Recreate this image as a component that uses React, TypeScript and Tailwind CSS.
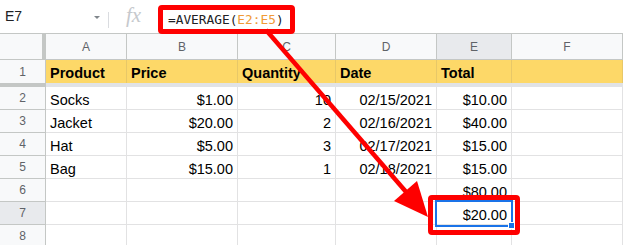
import React from "react";

const cols = "grid grid-cols-[46px_81px_111px_98px_101px_75px_111px]";

const rows: { n: number; cells: string[] }[] = [
  { n: 2, cells: ["Socks", "$1.00", "10", "02/15/2021", "$10.00", ""] },
  { n: 3, cells: ["Jacket", "$20.00", "2", "02/16/2021", "$40.00", ""] },
  { n: 4, cells: ["Hat", "$5.00", "3", "02/17/2021", "$15.00", ""] },
  { n: 5, cells: ["Bag", "$15.00", "1", "02/18/2021", "$15.00", ""] },
  { n: 6, cells: ["", "", "", "", "$80.00", ""] },
  { n: 7, cells: ["", "", "", "", "$20.00", ""] },
  { n: 8, cells: ["", "", "", "", "", ""] },
];

export default function App() {
  return (
    <div className="relative w-[623px] h-[245px] overflow-hidden bg-white font-['Liberation_Sans',Arial,sans-serif] text-black">
      {/* formula bar */}
      <div className="flex h-[34px] border-b border-[#c4c7c5]">
        <div className="flex w-[108px] items-center justify-between pl-[5px] pr-[8px] text-[14px] text-[#202124]">
          <span>E7</span>
          <span className="mt-[2px] h-0 w-0 border-x-[3px] border-t-[3px] border-x-transparent border-t-[#80868b]" />
        </div>
        <div className="mt-[12px] h-[16px] w-px bg-[#dadce0]" />
        <div className="flex w-[49px] items-center justify-center pb-[2px] font-['Liberation_Serif',serif] text-[21px] italic text-[#c6c9cd]">
          fx
        </div>
        <div className="mt-[5px] flex h-[29px] w-[137px] items-center rounded-[4px] border-[5px] border-[#fe0000] bg-white pl-[5px] font-['DejaVu_Sans_Mono',monospace] text-[12.8px] text-[#202124]">
          =AVERAGE(<span className="text-[#f09a37]">E2:E5</span>)
        </div>
      </div>

      {/* column headers */}
      <div className={`${cols} h-[26px] border-b border-[#c4c7c5] bg-[#f8f9fa] text-[12px] text-[#5f6368]`}>
        <div className="border-r-[4px] border-[#c4c7c5]" />
        {["A", "B", "C", "D", "E", "F"].map((c) => (
          <div
            key={c}
            className={`flex items-center justify-center border-r border-[#c4c7c5] ${c === "E" ? "bg-[#e8eaed]" : ""}`}
          >
            {c}
          </div>
        ))}
      </div>

      {/* header row 1 */}
      <div className={`${cols} h-[23px] text-[14.5px] font-bold`}>
        <div className="flex items-center justify-center border-r border-[#c4c7c5] bg-[#f8f9fa] text-[12px] font-normal text-[#5f6368]">
          1
        </div>
        {["Product", "Price", "Quantity", "Date", "Total", ""].map((h, i) => (
          <div key={i} className="flex items-end border-r border-[#e8c868] bg-[#fdd868] px-[4px] pb-[2px] leading-[16px]">
            {h}
          </div>
        ))}
      </div>
      <div className="flex h-[4px]">
        <div className="w-[46px] bg-[#c4c7c5]" />
        <div className="flex-1 bg-[#e1e3e6]" />
      </div>

      {rows.map((r) => (
        <div key={r.n} className={`${cols} h-[23px] text-[14.5px]`}>
          <div
            className={`flex items-center justify-center border-r border-b border-[#c4c7c5] text-[12px] text-[#5f6368] ${r.n === 7 ? "bg-[#e8eaed]" : "bg-[#f8f9fa]"}`}
          >
            {r.n}
          </div>
          {r.cells.map((c, i) => (
            <div
              key={i}
              className={`flex items-end border-r border-b border-[#e2e2e3] px-[4px] pb-[1px] leading-[16px] ${i === 0 ? "justify-start" : "justify-end"}`}
            >
              {c}
            </div>
          ))}
        </div>
      ))}

      {/* selection on E7 */}
      <div className="absolute left-[435px] top-[200px] h-[27px] w-[78px] border-2 border-[#1a73e8]" />
      <div className="absolute left-[508px] top-[222px] h-[7px] w-[7px] border border-white bg-[#1a73e8]" />

      {/* callout box on E7 */}
      <div className="absolute left-[428px] top-[195px] h-[40px] w-[92px] rounded-[4px] border-[5px] border-[#fe0000]" />

      {/* arrow */}
      <svg className="pointer-events-none absolute left-0 top-0" width="623" height="245" viewBox="0 0 623 245">
        <line x1="266" y1="30" x2="407" y2="193" stroke="#fe0000" strokeWidth="4.5" />
        <polygon points="428,217 394,201 417,181" fill="#fe0000" />
      </svg>
    </div>
  );
}
